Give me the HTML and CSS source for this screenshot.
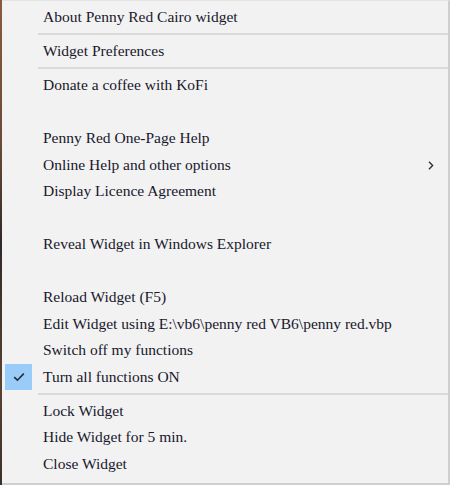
FILE: index.html
```html
<!DOCTYPE html>
<html>
<head>
<meta charset="utf-8">
<link rel="stylesheet" href="styles.css">
</head>
<body>
<div class="screen">
  <div class="wall"></div>
  <div class="menu">
    <div class="item"><span class="gutter"></span><span class="label">About Penny Red Cairo widget</span></div>
    <div class="sep"></div>
    <div class="item"><span class="gutter"></span><span class="label">Widget Preferences</span></div>
    <div class="sep"></div>
    <div class="item"><span class="gutter"></span><span class="label">Donate a coffee with KoFi</span></div>
    <div class="item blank"></div>
    <div class="item"><span class="gutter"></span><span class="label">Penny Red One-Page Help</span></div>
    <div class="item"><span class="gutter"></span><span class="label">Online Help and other options</span>
      <svg class="arrow" width="6" height="9" viewBox="0 0 6 9"><path d="M1 0.8 L4.6 4.5 L1 8.2" fill="none" stroke="#333" stroke-width="1.4"/></svg>
    </div>
    <div class="item"><span class="gutter"></span><span class="label">Display Licence Agreement</span></div>
    <div class="item blank"></div>
    <div class="item"><span class="gutter"></span><span class="label">Reveal Widget in Windows Explorer</span></div>
    <div class="item blank"></div>
    <div class="item"><span class="gutter"></span><span class="label">Reload Widget (F5)</span></div>
    <div class="item"><span class="gutter"></span><span class="label">Edit Widget using E:\vb6\penny red VB6\penny red.vbp</span></div>
    <div class="item"><span class="gutter"></span><span class="label">Switch off my functions</span></div>
    <div class="item"><span class="gutter"><span class="check"><svg width="12" height="10" viewBox="0 0 12 10"><path d="M1.2 5.2 L4.4 8.2 L10.8 1.6" fill="none" stroke="#2b2b2b" stroke-width="1.6"/></svg></span></span><span class="label">Turn all functions ON</span></div>
    <div class="sep"></div>
    <div class="item"><span class="gutter"></span><span class="label">Lock Widget</span></div>
    <div class="item"><span class="gutter"></span><span class="label">Hide Widget for 5 min.</span></div>
    <div class="item"><span class="gutter"></span><span class="label">Close Widget</span></div>
  </div>
</div>
</body>
</html>
```
FILE: styles.css
```css
html, body {
  margin: 0;
  padding: 0;
  width: 450px;
  height: 485px;
  overflow: hidden;
  background: #f2f2f2;
}
.screen {
  display: flex;
  width: 450px;
  height: 485px;
}
.wall {
  width: 2px;
  flex: none;
  background: linear-gradient(#8a5a3c, #6b4a36 30%, #2e2a28 50%, #5a4232 80%, #3a302a);
}
.menu {
  flex: 1;
  box-sizing: border-box;
  background: #f2f2f2;
  border-top: 1px solid #e3e3e3;
  border-right: 2px solid #cfcfcf;
  border-bottom: 2px solid #cfcfcf;
  padding: 3px 0 0 0;
  font-family: "Liberation Serif", serif;
  font-size: 15.5px;
  color: #18182c;
}
.item {
  height: 26.5px;
  display: flex;
  align-items: center;
  position: relative;
}
.gutter {
  width: 36px;
  height: 100%;
  flex: none;
  display: flex;
  align-items: center;
}
.label {
  padding-left: 5px;
  white-space: nowrap;
}
.arrow {
  position: absolute;
  right: 14px;
  top: 9px;
}
.check {
  margin-left: 3px;
  width: 27px;
  height: 26px;
  background: #99ccf9;
  display: flex;
  align-items: center;
  justify-content: center;
}
.sep {
  height: 7.5px;
  margin-left: 36px;
  margin-right: 0;
  display: flex;
  align-items: center;
}
.sep::before {
  content: "";
  display: block;
  flex: 1;
  height: 2px;
  background: #dadada;
}
```
